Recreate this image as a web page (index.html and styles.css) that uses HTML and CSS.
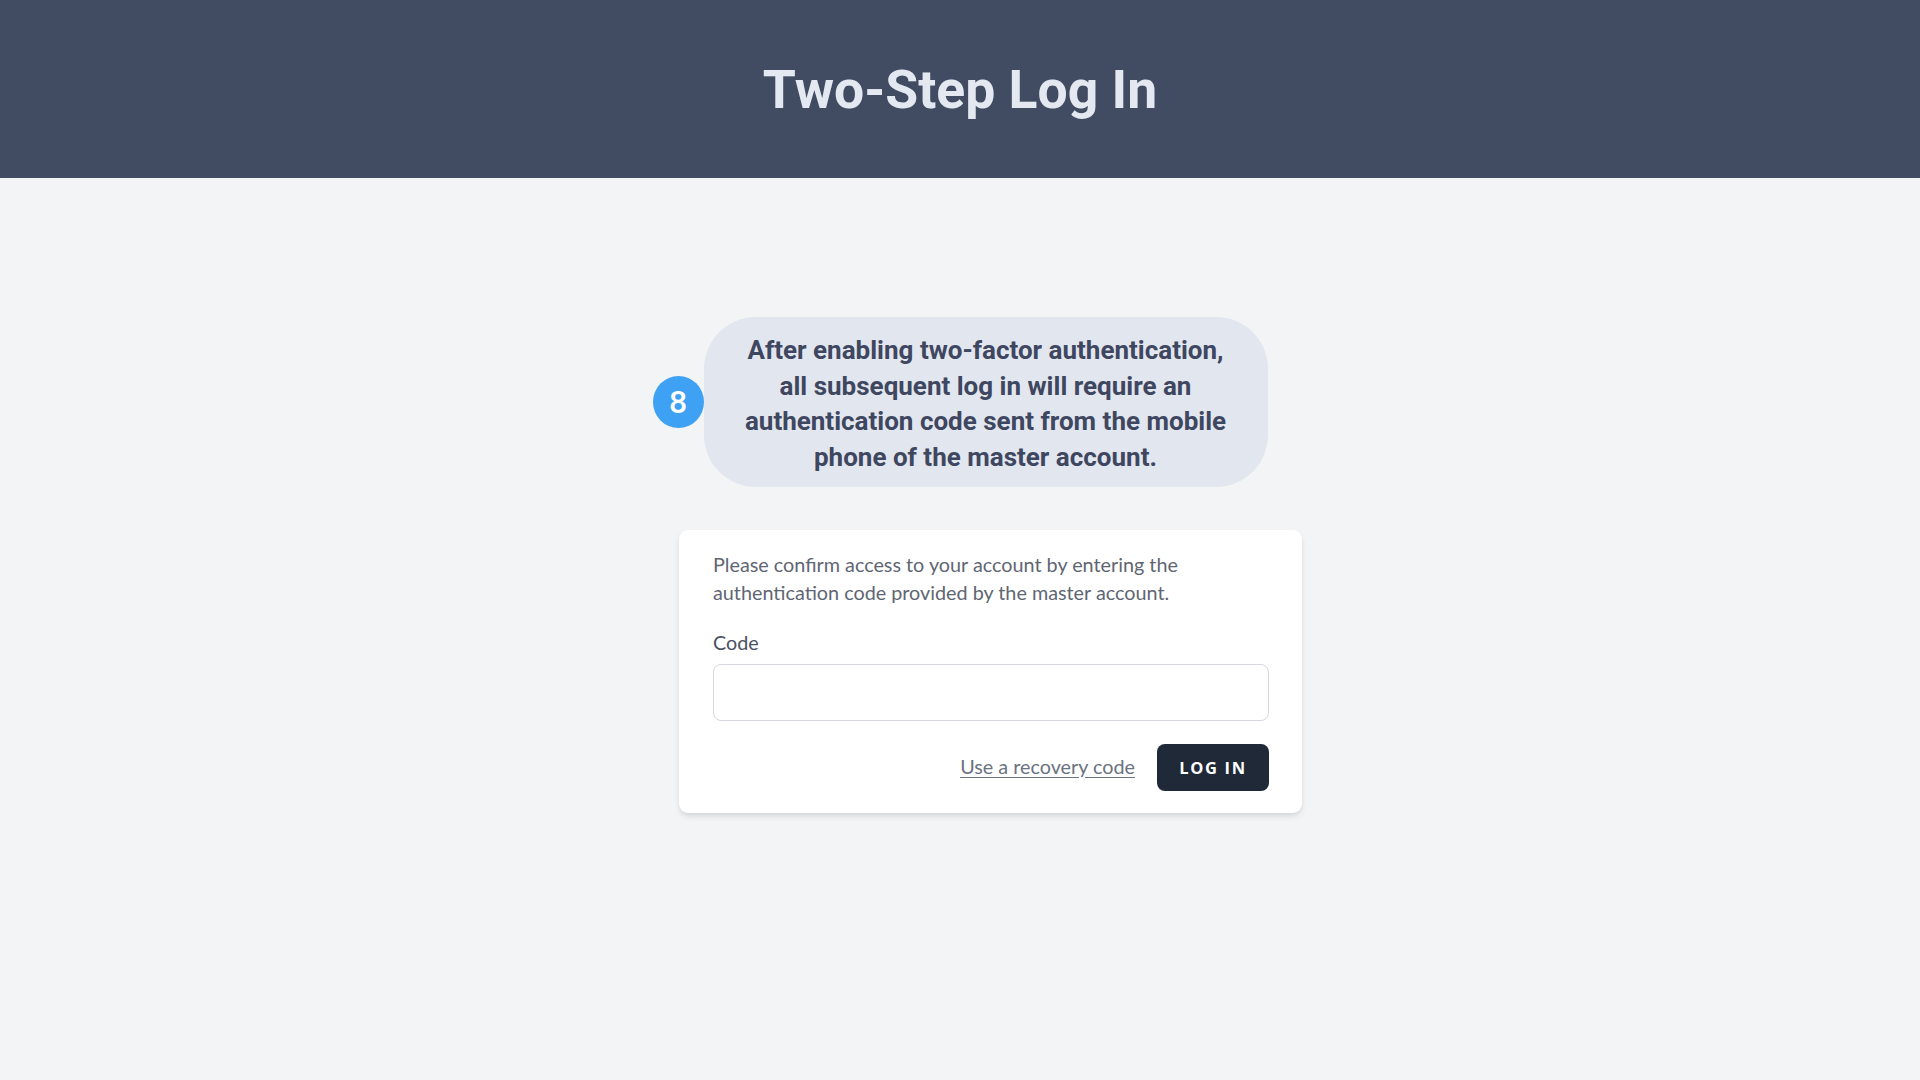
FILE: index.html
```html
<!DOCTYPE html>
<html lang="en">
<head>
<meta charset="utf-8">
<title>Two-Step Log In</title>
<link rel="stylesheet" href="styles.css">
</head>
<body>
<header class="topbar">
  <h1 class="title">Two-Step Log In</h1>
</header>
<main class="main">
  <div class="callout">
    <span class="badge">8</span>
    <p class="bubble">After enabling two-factor authentication,<br>all subsequent log in will require an<br>authentication code sent from the mobile<br>phone of the master account.</p>
  </div>
  <form class="card">
    <p class="intro">Please confirm access to your account by entering the authentication code provided by the master account.</p>
    <label class="label" for="code">Code</label>
    <input class="input" id="code" type="text">
    <div class="actions">
      <a class="link" href="#">Use a recovery code</a>
      <button class="btn" type="button">Log in</button>
    </div>
  </form>
</main>
</body>
</html>
```
FILE: styles.css
```css
* { box-sizing: border-box; }
html, body { margin: 0; padding: 0; }
body {
  background: #f3f4f6;
  min-height: 1080px;
  font-family: Lato, "Noto Sans", sans-serif;
}
.topbar {
  height: 178px;
  background: #414c63;
  display: flex;
  align-items: center;
  justify-content: center;
}
.title {
  margin: 0;
  font-family: Roboto, sans-serif;
  font-weight: 700;
  font-size: 53.5px;
  line-height: 1;
  color: #e4e8f1;
  padding-top: 1px;
}
.main {
  display: flex;
  flex-direction: column;
  align-items: center;
  padding-top: 139px;
}
.callout {
  display: flex;
  align-items: center;
}
.badge {
  width: 51px;
  height: 52px;
  border-radius: 50%;
  background: #3ea1f4;
  color: #fff;
  font-family: Roboto, sans-serif;
  font-weight: 500;
  font-size: 32px;
  display: flex;
  align-items: center;
  justify-content: center;
}
.bubble {
  margin: 0;
  width: 564px;
  height: 170px;
  padding: 16px 10px 10px;
  background: #e2e6ef;
  border-radius: 52px;
  font-family: Roboto, sans-serif;
  font-weight: 700;
  font-size: 26px;
  line-height: 35.5px;
  color: #3e475f;
  text-align: center;
  white-space: nowrap;
}
.card {
  margin: 43px 0 0 61px;
  width: 623px;
  background: #fff;
  border-radius: 9px;
  box-shadow: 0 4px 7px -1px rgba(0,0,0,0.1), 0 2px 4px -1px rgba(0,0,0,0.06);
  padding: 21px 33px 22px 34px;
  display: flex;
  flex-direction: column;
}
.intro {
  margin: 0;
  font-size: 19.8px;
  line-height: 27.5px;
  color: #5f6673;
}
.label {
  margin-top: 23px;
  font-size: 19.8px;
  line-height: 27px;
  color: #4a5160;
}
.input {
  margin-top: 8px;
  height: 57px;
  width: 100%;
  border: 1.5px solid #d5d8de;
  border-radius: 8px;
  background: #fff;
  font-size: 19px;
  padding: 0 14px;
}
.actions {
  margin-top: 23px;
  display: flex;
  justify-content: flex-end;
  align-items: center;
  gap: 22px;
}
.link {
  font-size: 19.8px;
  color: #6b7280;
  text-decoration: underline;
  text-underline-offset: 3px;
  margin-bottom: 4px;
}
.btn {
  width: 112px;
  height: 47px;
  border: 0;
  border-radius: 8px;
  background: #1f2937;
  color: #fff;
  font-family: "Open Sans", sans-serif;
  font-weight: 700;
  font-size: 16.5px;
  letter-spacing: 0.1em;
  text-transform: uppercase;
  padding: 0;
}
```
